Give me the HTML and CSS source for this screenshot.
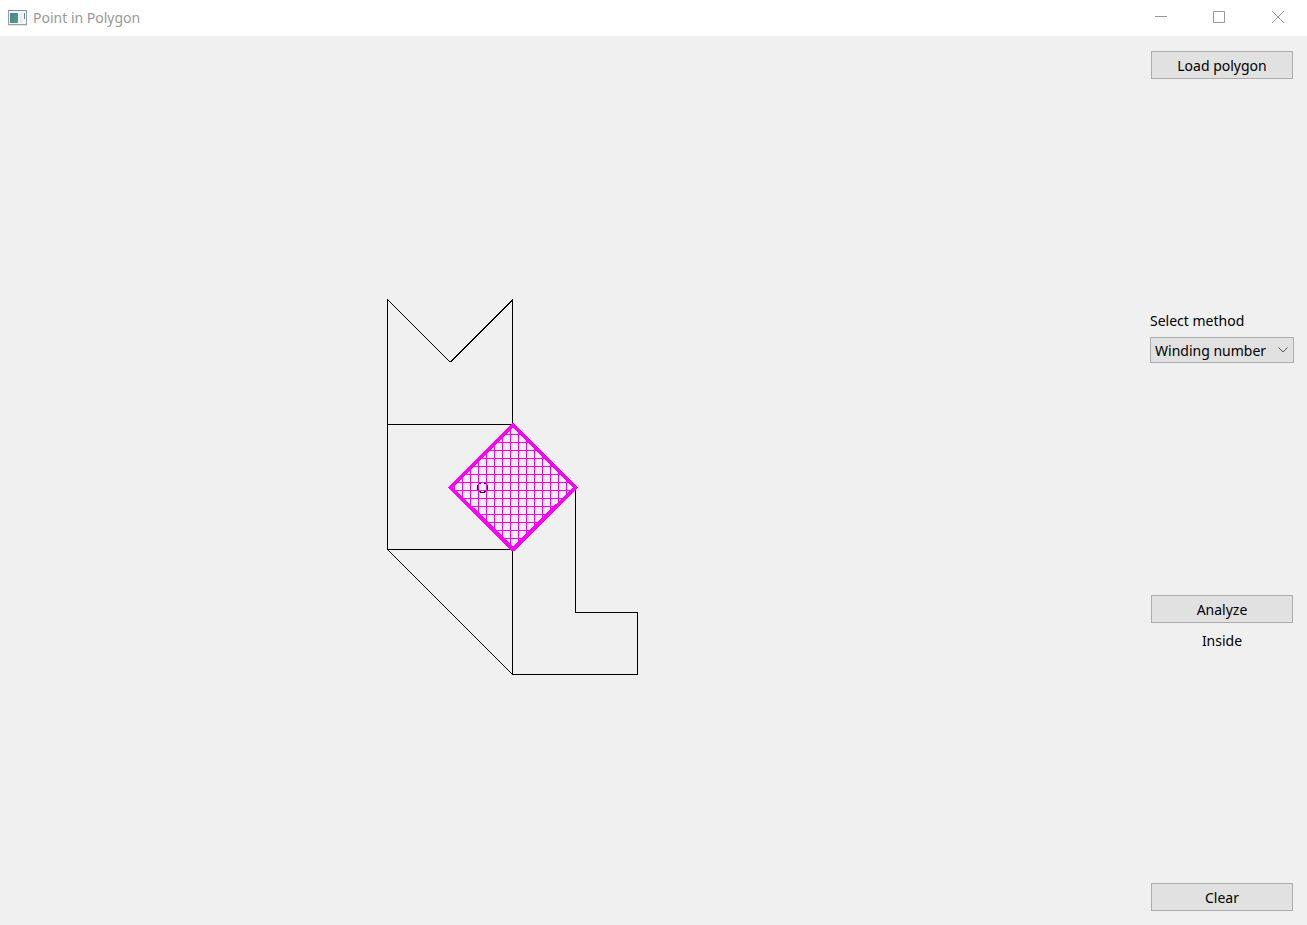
FILE: index.html
```html
<!DOCTYPE html>
<html lang="en">
<head>
<meta charset="utf-8">
<title>Point in Polygon</title>
<link rel="stylesheet" href="styles.css">
</head>
<body>
<header class="titlebar">
  <svg class="app-icon" width="19" height="16" viewBox="0 0 19 16" aria-hidden="true">
    <defs>
      <linearGradient id="pane" x1="0" y1="0" x2="1" y2="1">
        <stop offset="0" stop-color="#4a7fa5"/>
        <stop offset="1" stop-color="#4fa56f"/>
      </linearGradient>
    </defs>
    <rect x="0.5" y="0.5" width="18" height="14" fill="#f4f5f6" stroke="#9a9ea6"/>
    <path d="M0 0.5H19" stroke="#858b96"/>
    <path d="M0 15.5H19" stroke="#e4e4e4"/>
    <rect x="2" y="3" width="8" height="10" fill="url(#pane)"/>
    <rect x="12" y="3" width="2" height="10" fill="#e9ebed"/>
    <rect x="16" y="3" width="1" height="6" fill="#4d93a0"/>
  </svg>
  <h1 class="title">Point in Polygon</h1>
  <div class="window-controls">
    <button class="window-button" type="button" aria-label="Minimize">
      <svg width="12" height="12" viewBox="0 0 12 12"><path d="M0 5.5H12"/></svg>
    </button>
    <button class="window-button" type="button" aria-label="Maximize">
      <svg width="12" height="12" viewBox="0 0 12 12"><path d="M0.5 0.5H11.5V11.5H0.5Z"/></svg>
    </button>
    <button class="window-button close" type="button" aria-label="Close">
      <svg width="12" height="12" viewBox="0 0 12 12"><path d="M0 0L12 12M12 0L0 12"/></svg>
    </button>
  </div>
</header>
<main class="workspace">
  <svg class="canvas" role="img" aria-label="Polygons and the tested point">
    <defs>
      <pattern id="cross" x="462" y="398" width="8" height="8" patternUnits="userSpaceOnUse">
        <path d="M0 0.5H8M0.5 0V8" stroke="#ff00ff"/>
      </pattern>
    </defs>
    <g class="outlines">
      <path d="M387.5 388.5V263.5L450 326"/>
      <path d="M512.5 263.5V388.5H387.5"/>
      <path d="M387.5 388.5V513.5H512.5"/>
      <path d="M387.5 513.5L512.5 638.5V513.5"/>
      <path d="M575.5 451.5V576.5H637.5V638.5H512.5"/>
      <path class="edge" d="M450.5 326L513 263.5"/>
    </g>
    <ellipse class="point" cx="482.5" cy="451.5" rx="5" ry="5"/>
    <path class="hit" d="M513 389L575.5 451.5L513 513.5L450.5 451.5Z"/>
  </svg>
  <aside class="sidebar">
    <button class="button" type="button">Load polygon</button>
    <div class="method">
      <label class="label" for="method">Select method</label>
      <div class="select-box">
        <select class="select" id="method">
          <option>Winding number</option>
          <option>Ray crossing</option>
        </select>
        <svg class="chevron" width="10" height="6" viewBox="0 0 10 6" aria-hidden="true"><path d="M0.5 0.5L5 5L9.5 0.5"/></svg>
      </div>
    </div>
    <div class="analysis">
      <button class="button" type="button">Analyze</button>
      <output class="label">Inside</output>
    </div>
    <button class="button" type="button">Clear</button>
  </aside>
</main>
</body>
</html>
```
FILE: styles.css
```css
* {
  box-sizing: border-box;
}

body {
  margin: 0;
  min-height: 100vh;
  display: flex;
  flex-direction: column;
  background: #f0f0f0;
  color: #000;
  font: 14px/18px "Noto Sans", "Open Sans", sans-serif;
}

.titlebar {
  display: flex;
  align-items: center;
  height: 36px;
  padding-left: 8px;
  background: #fff;
}

.app-icon {
  margin-right: 6px;
}

.title {
  flex: 1;
  margin: 0;
  font-size: 14px;
  font-weight: 400;
  color: #999;
}

.window-controls {
  display: flex;
  height: 34px;
  align-self: flex-start;
}

.window-button {
  display: flex;
  align-items: center;
  justify-content: center;
  width: 58px;
  padding: 0;
  border: 0;
  background: none;
}

.window-button.close {
  width: 59px;
}

.window-button path {
  fill: none;
  stroke: #999;
}

.workspace {
  flex: 1;
  display: flex;
}

.canvas {
  flex: 1;
  min-width: 0;
  height: auto;
}

.outlines path {
  fill: none;
  stroke: #000;
  shape-rendering: crispEdges;
}

.outlines .edge {
  stroke-width: 2;
}

.point {
  fill: none;
  stroke: #000;
  shape-rendering: crispEdges;
}

.hit {
  fill: url(#cross);
  stroke: #f0f;
  stroke-width: 4;
  stroke-linejoin: round;
  shape-rendering: crispEdges;
}

.sidebar {
  display: flex;
  flex-direction: column;
  justify-content: space-between;
  width: 157px;
  padding: 15px 14px 14px 1px;
}

.button {
  width: 100%;
  height: 28px;
  padding: 2px 0 0;
  border: 1px solid #adadad;
  background: #e1e1e1;
  color: #000;
  font: inherit;
}

.method {
  display: flex;
  flex-direction: column;
  gap: 7px;
  margin: 0 -1px;
}

.select-box {
  display: grid;
  align-items: center;
}

.select {
  grid-area: 1 / 1;
  width: 100%;
  height: 26px;
  padding: 2px 0 0 4px;
  border: 1px solid #adadad;
  border-radius: 0;
  background: #e1e1e1;
  color: #000;
  font: inherit;
  appearance: none;
}

.chevron {
  grid-area: 1 / 1;
  justify-self: end;
  margin-right: 6px;
  pointer-events: none;
}

.chevron path {
  fill: none;
  stroke: #555;
}

.analysis {
  display: flex;
  flex-direction: column;
  align-items: center;
  gap: 9px;
}
```
